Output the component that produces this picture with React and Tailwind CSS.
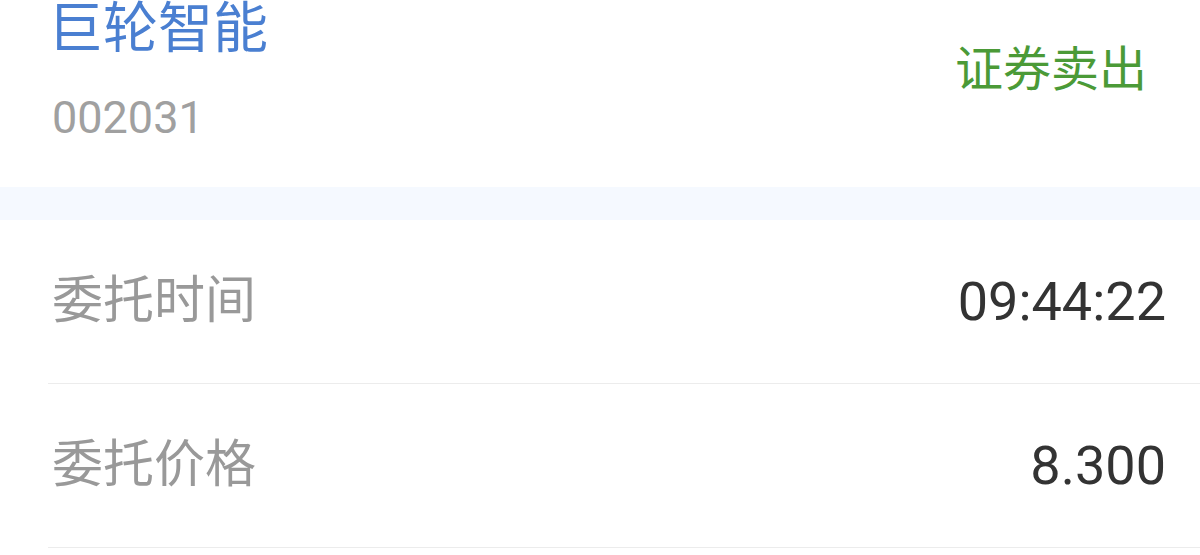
import React from 'react';

const rows = [
  { label: '委托时间', value: '09:44:22' },
  { label: '委托价格', value: '8.300' },
];

const font = { fontFamily: 'Roboto, "Noto Sans CJK SC", sans-serif' };

const App = () => {
  return (
    <div className="w-[1200px] h-[555px] overflow-hidden bg-white" style={font}>
      {/* Header */}
      <div className="h-[187px] flex justify-between pl-[52px] pr-[53px]">
        <div className="flex flex-col">
          <div className="text-[55px] leading-[56px] text-[#4a7fd1] -ml-[4px]">巨轮智能</div>
          <div className="text-[45px] leading-[45px] text-[#a0a0a0] mt-[39px]">002031</div>
        </div>
        <div className="text-[48px] leading-[48px] text-[#4b9a37] mt-[46px]">证券卖出</div>
      </div>

      <div className="h-[33px] bg-[#f5f9ff]"></div>

      {/* Rows */}
      <div className="pl-[48px]">
        {rows.map((row) => (
          <div
            key={row.label}
            className="h-[164px] flex items-center justify-between border-b border-[#ececec] pl-[4px] pr-[34px]"
          >
            <span className="text-[51px] text-[#999999]">{row.label}</span>
            <span className="text-[54px] text-[#333333]">{row.value}</span>
          </div>
        ))}
      </div>
    </div>
  );
};

export default App;
